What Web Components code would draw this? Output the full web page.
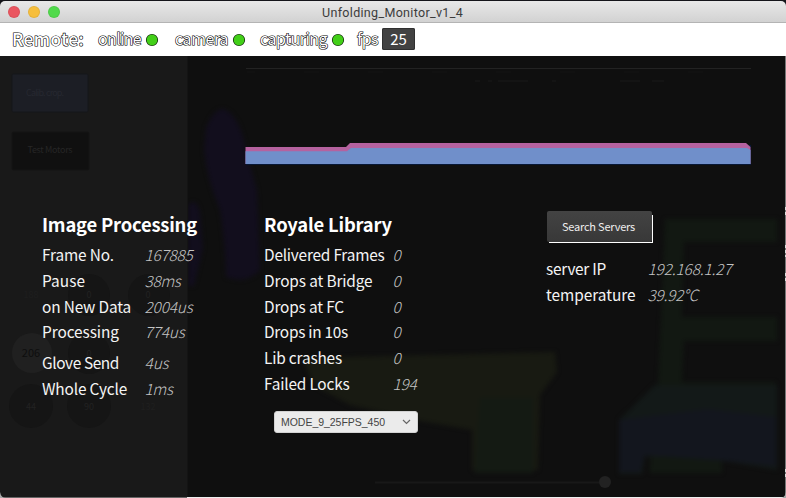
<!DOCTYPE html>
<html lang="en">
<head>
<meta charset="utf-8">
<title>Unfolding_Monitor_v1_4</title>
<style>
html,body{margin:0;height:100%;overflow:hidden;background:#15151a}
</style>
</head>
<body>
<monitor-window></monitor-window>
<script>
const define = (name, html, setup) => customElements.define(name, class extends HTMLElement {
  connectedCallback() {
    if (this.shadowRoot) return;
    this.attachShadow({mode: 'open'}).innerHTML = html;
    if (setup) setup(this, this.shadowRoot);
  }
});

// Text tracked to a given width in pixels.
define('fit-text', `<style>:host{display:inline-block;white-space:nowrap;width:max-content}</style><slot></slot>`, (el, r) => {
  const natural = el.getBoundingClientRect().width;
  const n = r.querySelector('slot').assignedNodes({flatten: true}).map(x => x.textContent).join('').trim().length;
  const w = +el.getAttribute('w');
  if (w && n > 1) el.style.letterSpacing = ((w - natural) / n).toFixed(3) + 'px';
});

define('title-bar', `<style>
:host{display:grid;grid-template-columns:1fr auto 1fr;align-items:center;height:21px;margin-top:1px;border-bottom:1px solid #b4b4b4;
 background:linear-gradient(#e8e8e8,#d2d2d2);border-radius:5px 5px 0 0;font:12.5px Roboto,sans-serif;color:#3c3c3c}
.l{display:flex;gap:8px;padding-left:8px}
i{width:12px;height:12px;border-radius:50%;box-sizing:border-box;border:1px solid #0001}
fit-text{margin:1px 1px 0 0}
</style><div class="l"><i style="background:#ea5660"></i><i style="background:#f6be3c"></i><i style="background:#51da4c"></i></div><fit-text w="141"><slot></slot></fit-text><span></span>`);

define('status-item', `<style>
:host{display:flex;align-items:center;height:33px;color:#fff;-webkit-text-stroke:1.2px #000;paint-order:stroke fill;font-size:16px;line-height:30px}
fit-text{margin-top:-3px}
svg{display:block;margin-left:4px}
</style><fit-text><slot></slot></fit-text><svg width="14" height="14"><circle cx="7" cy="7" r="5.4" fill="#42cf18" stroke="#0b2105" stroke-width="1.4"/></svg>`, (el, r) => {
  if (el.hasAttribute('plain')) r.querySelector('svg').remove();
});

define('remote-bar', `<style>
:host{display:flex;align-items:center;height:33px;background:#fff;padding-left:12px;box-sizing:border-box}
.r{font-size:17.3px;font-weight:500;margin:1px 14px 0 0}
.a{margin-right:16px}.c{margin-right:14px}.b{margin-right:12px}
.n{width:33px;height:22px;margin-left:4px;margin-top:-1px;border-radius:2px;background:#424242;box-shadow:inset 0 0 0 1px #303030;color:#fff;font-size:15px;line-height:22px;text-align:center}
</style>
<status-item class="r" plain><fit-text w="72">Remote:</fit-text></status-item>
<status-item class="a"><fit-text w="43">online</fit-text></status-item>
<status-item class="c"><fit-text w="53">camera</fit-text></status-item>
<status-item class="b"><fit-text w="67">capturing</fit-text></status-item>
<status-item plain><fit-text w="21">fps</fit-text></status-item>
<div class="n">25</div>`);

define('stat-row', `<style>
:host{display:grid;grid-template-columns:var(--key) auto;height:25.7px;align-items:center;line-height:25px;justify-content:start}
.v{font-style:italic;font-weight:300;color:#c4c4c4}
</style>`, (el, r) => {
  for (const c of ['k', 'v']) {
    const f = document.createElement('fit-text');
    f.className = c;
    f.setAttribute('w', el.getAttribute(c + 'w'));
    f.textContent = el.getAttribute(c);
    r.append(f);
  }
});

define('stat-panel', `<style>
:host{display:block}
h2{margin:-1px 0 4px;font-size:18.4px;line-height:28px;height:28px;font-weight:700;color:#fff}
</style><h2><slot name="title"></slot></h2><slot></slot>`);

define('mode-select', `<style>
:host{display:flex;align-items:center;justify-content:space-between;width:144px;height:22px;box-sizing:border-box;padding:0 6px;
 border-radius:3px;background:#ebebeb;border:1px solid #d2d2d2;color:#444;font:10.5px "Liberation Sans",sans-serif}
</style><fit-text w="104"><slot></slot></fit-text><svg width="9" height="6" fill="none" stroke="#666" stroke-width="1.2"><path d="M1 1l3.5 3.5L8 1"/></svg>`);

define('push-button', `<style>
:host{display:flex;align-items:center;justify-content:center;width:105px;height:31px;border-radius:2px;
 background:linear-gradient(#434343,#383838);color:#eee;font-size:11px;position:relative}
:host::before{content:"";position:absolute;inset:4px -1px -1px 2px;border:solid #fff;border-width:0 1px 1px 0}
fit-text{margin:-2px 2px 0 0}
</style><fit-text w="73"><slot></slot></fit-text>`);

// Stacked area: blue base with a magenta band on top.
define('usage-chart', `<style>:host,svg{display:block}</style>
<svg width="506" height="101">
<path d="M1 4.5h505" stroke="#222"/>
<path d="M2 8h8M59 8h15M123 8h15M187 8h15M251 8h15M315 8h15M379 8h15M443 8h15" stroke="#141414"/>
<path d="M230 17h5m8 0h4m6 0h30m24 0h4m64 0h20m12 0h12" stroke="#141414" stroke-width="2"/>
<path d="M1 85H101L105 81H506V101.5H1Z" fill="#071735"/>
<path d="M.5 83H101l4-4H501l4.500 4V100H.5Z" fill="#b5629f"/>
<path d="M.5 87.300H102l4-3.300H502l3.500 2V100H.5Z" fill="#708fca"/>
</svg>`);

// Dimmed depth-camera view with its disabled side controls.
define('depth-backdrop', `<style>
:host,svg{display:block}svg{font:9px/1 "Noto Sans CJK SC","Open Sans",sans-serif}
</style>
<svg width="786" height="442" viewBox="0 56 786 442">
<defs><filter id="f" color-interpolation-filters="sRGB"><feGaussianBlur stdDeviation="2.2"/></filter></defs>
<path fill="#0f0f0f" d="M0 56h786v442H0z"/>
<g filter="url(#f)">
<path fill="#120e1d" d="M206 128Q214 108 224 109 240 116 246 150L257 190 260 270Q247 285 226 277 225 240 220 210 207 180 204 150ZM188 205q9-8 12 8l3 35-9 38h-6z"/>
<path fill="#181a12" d="M303 358L555 352 557 372 540 395 538 470H472V430L415 420 350 405 313 385Z"/>
<path fill="#141a13" d="M480 398h53v75h-58z"/>
<path fill="#121812" d="M665 219H777V242H684L682 317H777V341H684L682 382H775V398L722 403V473H650L651 410 658 385Z"/>
<path fill="#131918" d="M655 385H777V470L730 462 668 457 645 457 642 474H619V420Z"/>
<path fill="#13161e" d="M634 418L708 409 776 417V466L718 460 645 455 640 472H619V420Z"/>
</g>
<path fill="#191919" d="M0 56h187v442H0z"/>
<path stroke="#141414" d="M187.5 56v442"/>
<rect x="12" y="74" width="76" height="38" rx="1" fill="#1c1e25" stroke="#15161a"/>
<rect x="12" y="132" width="77" height="38" rx="1" fill="#101010" stroke="#151515"/>
<g fill="#151515"><circle cx="89" cy="295" r="21"/><circle cx="149" cy="295" r="21"/><circle cx="89" cy="353" r="21"/><circle cx="31" cy="406" r="22"/><circle cx="89" cy="406" r="22"/></g>
<circle cx="32" cy="353" r="20" fill="#202020"/>
<g fill="#222" text-anchor="middle">
<text x="45" y="96" fill="#262830" textLength="38">Calib. crop.</text><text x="50" y="153" fill="#262626" textLength="45">Test Motors</text>
<text x="31" y="298" fill="#1e1e1e">188</text><text x="89" y="298">0</text><text x="148" y="298">0</text>
<text x="31" y="357" fill="#0e0e0e" font-size="11">206</text><text x="89" y="357">0</text>
<text x="31" y="410">44</text><text x="89" y="410">90</text><text x="148" y="410" fill="#1f1f1f">132</text></g>
<path d="M375 482.5h224" stroke="#181818" stroke-width="2"/><circle cx="605" cy="482" r="6" fill="#222"/>
<path d="M785.5 56v442" stroke="#777"/>
<path d="M785.5 207v9m0 29v12m0 16v8m0 188v8" stroke="#ddd" stroke-dasharray="3 2"/>
<path d="M0 497.5h187" stroke="#666"/><path d="M187 497.5h598" stroke="#eee"/>
<path d="M0 492v6h6q-5 0-6-6M786 492v6h-6q5 0 6-6" fill="#aaa"/>
</svg>`);

define('monitor-window', `<style>
:host{display:flex;flex-direction:column;width:786px;height:498px;overflow:hidden;font:15.4px "Noto Sans CJK SC","Open Sans",sans-serif;color:#f4f4f4}
main{display:grid;height:442px;flex:none}
main>*{grid-area:1/1}
.c{display:grid;grid-template-rows:155px 1fr;padding-left:42px;position:relative}
usage-chart{margin:8px 0 0 203px}
.p{display:grid;grid-template-columns:222px 282px 1fr;align-items:start}
.one{--key:102.500px}.two{--key:128.500px}.three{--key:101.500px}
.gap{margin-top:5px}
mode-select{margin:15px 0 0 10px}
push-button{margin:0 0 14px 1px}
</style>
<title-bar>Unfolding_Monitor_v1_4</title-bar>
<remote-bar></remote-bar>
<main><depth-backdrop></depth-backdrop>
<div class="c"><usage-chart></usage-chart><div class="p">
<stat-panel class="one"><fit-text slot="title" w="155">Image Processing</fit-text>
<stat-row k="Frame No." kw="72" v="167885" vw="48"></stat-row>
<stat-row k="Pause" kw="43" v="38ms" vw="36"></stat-row>
<stat-row k="on New Data" kw="89" v="2004us" vw="48"></stat-row>
<stat-row k="Processing" kw="77" v="774us" vw="40"></stat-row>
<stat-row class="gap" k="Glove Send" kw="77" v="4us" vw="24"></stat-row>
<stat-row k="Whole Cycle" kw="85" v="1ms" vw="28"></stat-row></stat-panel>
<stat-panel class="two"><fit-text slot="title" w="128">Royale Library</fit-text>
<stat-row k="Delivered Frames" kw="120.500" v="0" vw="8"></stat-row>
<stat-row k="Drops at Bridge" kw="108.500" v="0" vw="8"></stat-row>
<stat-row k="Drops at FC" kw="80" v="0" vw="8"></stat-row>
<stat-row k="Drops in 10s" kw="84" v="0" vw="8"></stat-row>
<stat-row k="Lib crashes" kw="78" v="0" vw="8"></stat-row>
<stat-row k="Failed Locks" kw="85.500" v="194" vw="24"></stat-row>
<mode-select>MODE_9_25FPS_450</mode-select></stat-panel>
<div class="three"><push-button>Search Servers</push-button>
<stat-row k="server IP" kw="60" v="192.168.1.27" vw="84"></stat-row>
<stat-row k="temperature" kw="89.500" v="39.92°C" vw="50.500"></stat-row></div>
</div></div></main>`);
</script>
</body>
</html>
